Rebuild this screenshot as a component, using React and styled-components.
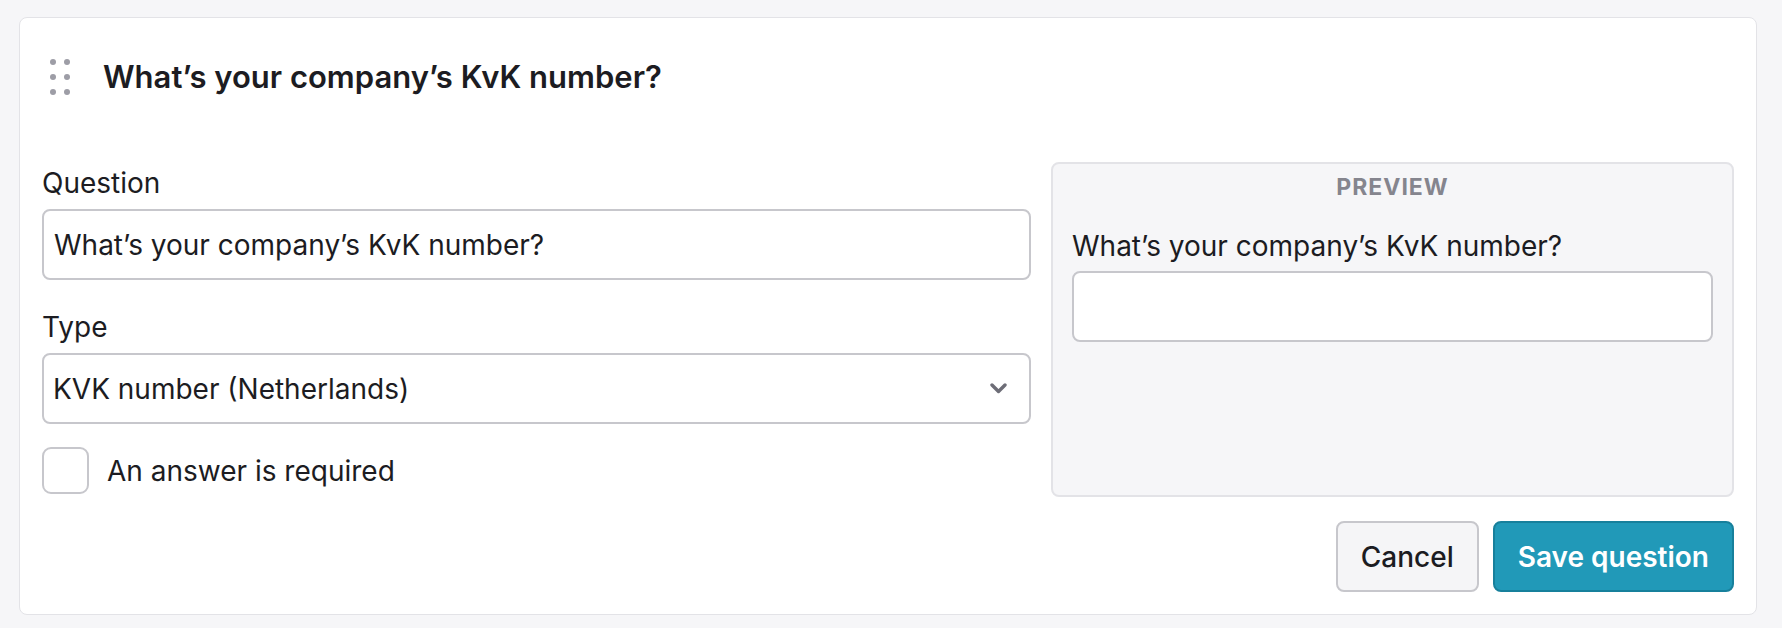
import React, { useState } from 'react';
import styled, { createGlobalStyle } from 'styled-components';

const GlobalStyle = createGlobalStyle`
  html, body {
    margin: 0;
    padding: 0;
    background: #f6f6f8;
  }
  body {
    font-family: Inter, "Noto Sans", sans-serif;
    color: #1c1c22;
  }
  * { box-sizing: border-box; }
`;

const Page = styled.div`
  padding: 17px 25px 12px 19px;
`;

const Card = styled.div`
  background: #ffffff;
  border: 1px solid #e3e3e7;
  border-radius: 8px;
  padding: 22px;
`;

const Header = styled.div`
  display: flex;
  align-items: center;
  height: 74px;
  margin-bottom: 48px;
`;

const DragHandle = styled.div`
  display: grid;
  grid-template-columns: repeat(2, 6px);
  grid-auto-rows: 6px;
  column-gap: 8px;
  row-gap: 9px;
  margin-left: 8px;
  margin-right: 33px;
  span {
    width: 6px;
    height: 6px;
    border-radius: 50%;
    background: #9d9da6;
  }
`;

const Title = styled.h2`
  margin: 0;
  font-size: 31px;
  font-weight: 600;
  line-height: 1.3;
`;

const Body = styled.div`
  display: grid;
  grid-template-columns: 989px 1fr;
  column-gap: 20px;
`;

const Column = styled.div`
  display: flex;
  flex-direction: column;
  padding-bottom: 3px;
`;

const Label = styled.label`
  font-size: 28px;
  line-height: 42px;
  margin-bottom: ${(p) => p.$gap || 5}px;
  margin-top: ${(p) => p.$top || 0}px;
`;

const Input = styled.input`
  width: 100%;
  height: 71px;
  border: 2px solid #c7c7cc;
  border-radius: 8px;
  padding: 0 10px;
  font-family: inherit;
  font-size: 28px;
  color: #1c1c22;
  background: #fff;
  outline: none;
`;

const SelectBox = styled.div`
  height: 71px;
  border: 2px solid #c7c7cc;
  border-radius: 8px;
  display: flex;
  align-items: center;
  padding: 0 22px 0 9px;
  font-size: 28px;
  justify-content: space-between;
  background: #fff;
`;

const CheckRow = styled.label`
  display: flex;
  align-items: center;
  gap: 18px;
  margin-top: 23px;
  font-size: 28px;
  cursor: pointer;
`;

const Check = styled.span`
  width: 47px;
  height: 47px;
  border: 2px solid #c7c7cc;
  border-radius: 9px;
  background: ${(p) => (p.$on ? '#2199b8' : '#fff')};
`;

const Preview = styled.div`
  background: #f6f6f8;
  border: 2px solid #e3e3e7;
  border-radius: 8px;
  padding: 6px 19px 20px;
  display: flex;
  flex-direction: column;
`;

const PreviewHead = styled.div`
  text-align: center;
  font-size: 23px;
  font-weight: 700;
  letter-spacing: 1px;
  color: #85858e;
  line-height: 34px;
  margin-bottom: 21px;
`;

const Footer = styled.div`
  display: flex;
  justify-content: flex-end;
  gap: 14px;
  margin-top: 24px;
`;

const Button = styled.button`
  height: 71px;
  padding: 0 23px;
  border-radius: 8px;
  font-family: inherit;
  font-size: 28px;
  font-weight: ${(p) => (p.$primary ? 600 : 500)};
  border: 2px solid ${(p) => (p.$primary ? '#17809c' : '#c7c7cc')};
  background: ${(p) => (p.$primary ? '#2199b8' : '#f5f5f7')};
  color: ${(p) => (p.$primary ? '#ffffff' : '#1c1c22')};
  cursor: pointer;
`;

const Chevron = () => (
  <svg width="17" height="11" viewBox="0 0 17 11">
    <path d="M2 2 L8.5 8.5 L15 2" fill="none" stroke="#6d6d77" strokeWidth="3.4" strokeLinecap="round" strokeLinejoin="round" />
  </svg>
);

export default function App() {
  const [question, setQuestion] = useState('What’s your company’s KvK number?');
  const [required, setRequired] = useState(false);

  return (
    <Page>
      <GlobalStyle />
      <Card>
        <Header>
          <DragHandle>
            {[0, 1, 2, 3, 4, 5].map((i) => <span key={i} />)}
          </DragHandle>
          <Title>{question}</Title>
        </Header>
        <Body>
          <Column>
            <Label>Question</Label>
            <Input value={question} onChange={(e) => setQuestion(e.target.value)} />
            <Label $top={26}>Type</Label>
            <SelectBox>
              <span>KVK number (Netherlands)</span>
              <Chevron />
            </SelectBox>
            <CheckRow onClick={() => setRequired(!required)}>
              <Check $on={required} />
              An answer is required
            </CheckRow>
          </Column>
          <Preview>
            <PreviewHead>PREVIEW</PreviewHead>
            <Label $gap={4}>{question}</Label>
            <Input />
          </Preview>
        </Body>
        <Footer>
          <Button>Cancel</Button>
          <Button $primary>Save question</Button>
        </Footer>
      </Card>
    </Page>
  );
}
